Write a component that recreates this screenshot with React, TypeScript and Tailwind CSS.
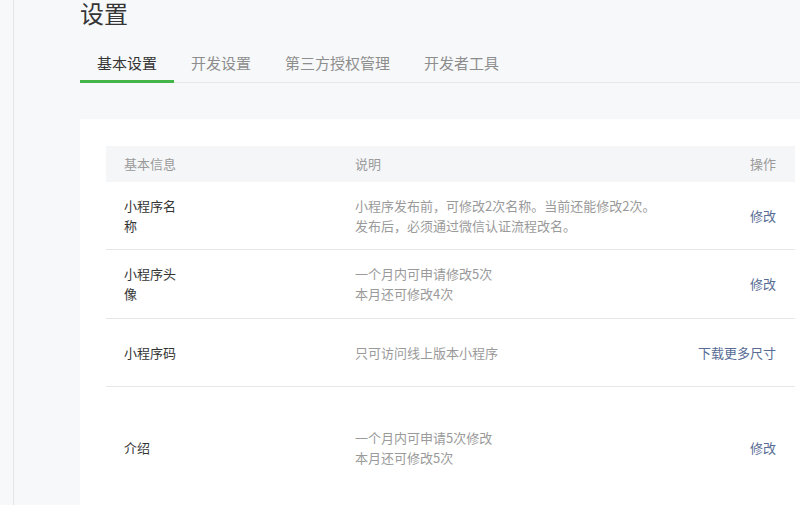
import React from "react";

const rows = [
  { name: "小程序名称", desc: ["小程序发布前，可修改2次名称。当前还能修改2次。", "发布后，必须通过微信认证流程改名。"], action: "修改", h: "h-[68px]" },
  { name: "小程序头像", desc: ["一个月内可申请修改5次", "本月还可修改4次"], action: "修改", h: "h-[69px]" },
  { name: "小程序码", desc: ["只可访问线上版本小程序"], action: "下载更多尺寸", h: "h-[68px]" },
  { name: "介绍", desc: ["一个月内可申请5次修改", "本月还可修改5次"], action: "修改", h: "h-[122px]" },
];

const tabs = ["基本设置", "开发设置", "第三方授权管理", "开发者工具"];

export default function App() {
  return (
    <div
      className="flex h-[505px] w-[800px] overflow-hidden bg-[#f7f8fa]"
      style={{ fontFamily: '"Noto Sans CJK SC", "Noto Sans", sans-serif' }}
    >
      <div className="w-[14px] shrink-0 border-r border-[#e4e6ea] bg-[#f7f8fa]" />
      <div className="ml-[66px] flex flex-1 flex-col">
        <h1 className="text-[24px] leading-[26px] font-normal text-[#353535]">设置</h1>
        <div className="mt-[20px] flex border-b border-[#e7e7eb]">
          {tabs.map((t, i) => (
            <div
              key={t}
              className={
                i === 0
                  ? "-mb-px border-b-[3px] border-[#44b549] px-[17px] text-[15px] leading-[34px] text-[#353535]"
                  : "-mb-px border-b-[3px] border-transparent px-[17px] text-[15px] leading-[34px] text-[#8d8d8d]"
              }
            >
              {t}
            </div>
          ))}
        </div>
        <div className="mt-[36px] flex-1 rounded-tl-[2px] bg-white pt-[27px] pr-[5px] pl-[26px]">
          <div className="flex h-[36px] items-center bg-[#f5f6f8] text-[13px] text-[#9a9a9a]">
            <div className="w-[249px] shrink-0 pl-[18px]">基本信息</div>
            <div className="flex-1">说明</div>
            <div className="pr-[19px]">操作</div>
          </div>
          {rows.map((r) => (
            <div key={r.name} className={`flex items-center border-b border-[#e7e7eb] text-[13px] leading-[20px] ${r.h}`}>
              <div className="w-[249px] shrink-0 pl-[18px]">
                <div className="w-[56px] text-[#353535]">{r.name}</div>
              </div>
              <div className="flex-1 text-[#9a9a9a]">
                {r.desc.map((d) => (
                  <div key={d}>{d}</div>
                ))}
              </div>
              <div className="pr-[19px] text-[#576b95]">{r.action}</div>
            </div>
          ))}
        </div>
      </div>
    </div>
  );
}
